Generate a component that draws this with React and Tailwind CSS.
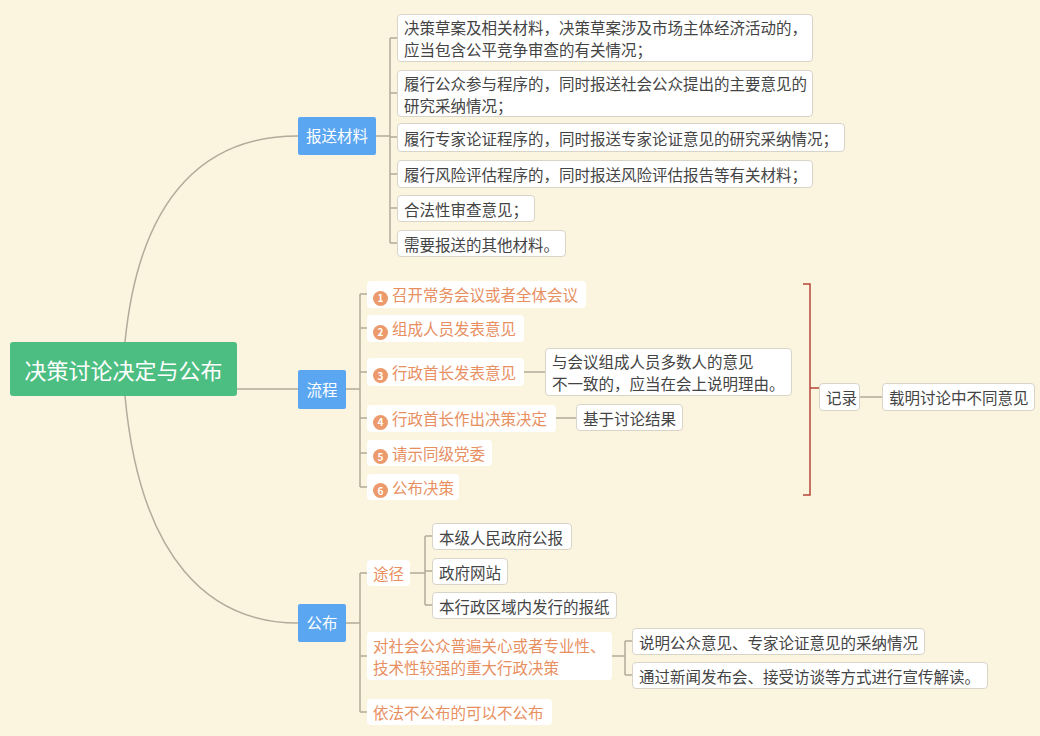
const F = { fontFamily: '"Noto Sans CJK SC", "Noto Sans", sans-serif' };

function Box({ x, y, w, h, children, orange }) {
  return (
    <div
      className={`absolute flex items-center whitespace-nowrap rounded-[4px] bg-white px-[6px] text-[15.5px] leading-[22px] ${orange ? "text-[#e88f62]" : "border border-[#d9d4c8] text-[#444]"}`}
      style={{ left: x, top: y, width: w, height: h }}
    >
      <div>{children}</div>
    </div>
  );
}

function Num({ n }) {
  return (
    <span className="mr-[4px] inline-flex h-[15px] w-[15px] items-center justify-center rounded-full bg-[#ec9a6c] align-[-1px] text-[10px] font-bold leading-none text-white">
      {n}
    </span>
  );
}

function Topic({ x, y, w, h, children }) {
  return (
    <div className="absolute flex items-center justify-center rounded-[2px] bg-[#5aa6f1] text-[15.5px] text-white" style={{ left: x, top: y, width: w, height: h }}>
      {children}
    </div>
  );
}

const line = "#b3ab9b";

export default function App() {
  return (
    <div className="relative h-[736px] w-[1040px] overflow-hidden bg-[#fbf4df]" style={F}>
      <svg className="absolute left-0 top-0" width="1040" height="736" fill="none" strokeWidth="1.5">
        <path d="M125 342 C 140 190, 210 136, 298 136" stroke={line} />
        <path d="M237 389 L298 389" stroke={line} />
        <path d="M125 396 C 140 560, 210 623, 298 623" stroke={line} />
        <path d="M376 136 L390 136 M390 38 L390 243 M390 38 L397 38 M390 93 L397 93 M390 137 L397 137 M390 174 L397 174 M390 208 L397 208 M390 243 L397 243" stroke={line} />
        <path d="M346 389 L360 389 M360 294 L360 487 M360 294 L367 294 M360 328 L367 328 M360 372 L367 372 M360 418 L367 418 M360 453 L367 453 M360 487 L367 487" stroke={line} />
        <path d="M524 372 L545 372 M556 418 L576 418" stroke={line} />
        <path d="M803 284 L810 284 L810 495 L803 495 M810 388 L819 388" stroke="#b5473a" />
        <path d="M860 397 L882 397" stroke={line} />
        <path d="M346 623 L360 623 M360 573 L360 712 M360 573 L367 573 M360 656 L367 656 M360 712 L367 712" stroke={line} />
        <path d="M410 573 L425 573 M425 536 L425 605 M425 536 L432 536 M425 571 L432 571 M425 605 L432 605" stroke={line} />
        <path d="M612 656 L625 656 M625 641 L625 675 M625 641 L632 641 M625 675 L632 675" stroke={line} />
      </svg>

      <div className="absolute left-[10px] top-[342px] flex h-[54px] w-[227px] items-center justify-center rounded-[3px] bg-[#4dbe82] text-[22px] text-white">
        决策讨论决定与公布
      </div>

      <Topic x={298} y={117} w={78} h={38}>报送材料</Topic>
      <Topic x={298} y={370} w={48} h={39}>流程</Topic>
      <Topic x={298} y={604} w={48} h={38}>公布</Topic>

      <Box x={397} y={14} w={416} h={48}>决策草案及相关材料，决策草案涉及市场主体经济活动的，<br />应当包含公平竞争审查的有关情况；</Box>
      <Box x={397} y={70} w={416} h={47}>履行公众参与程序的，同时报送社会公众提出的主要意见的<br />研究采纳情况；</Box>
      <Box x={397} y={123} w={448} h={29}>履行专家论证程序的，同时报送专家论证意见的研究采纳情况；</Box>
      <Box x={397} y={160} w={416} h={28}>履行风险评估程序的，同时报送风险评估报告等有关材料；</Box>
      <Box x={397} y={195} w={138} h={27}>合法性审查意见；</Box>
      <Box x={397} y={230} w={169} h={27}>需要报送的其他材料。</Box>

      <Box orange x={367} y={281} w={219} h={27}><Num n="1" />召开常务会议或者全体会议</Box>
      <Box orange x={367} y={315} w={157} h={27}><Num n="2" />组成人员发表意见</Box>
      <Box orange x={367} y={358} w={157} h={28}><Num n="3" />行政首长发表意见</Box>
      <Box orange x={367} y={405} w={189} h={27}><Num n="4" />行政首长作出决策决定</Box>
      <Box orange x={367} y={440} w={125} h={26}><Num n="5" />请示同级党委</Box>
      <Box orange x={367} y={474} w={92} h={26}><Num n="6" />公布决策</Box>

      <Box x={545} y={348} w={247} h={48}>与会议组成人员多数人的意见<br />不一致的，应当在会上说明理由。</Box>
      <Box x={576} y={404} w={107} h={27}>基于讨论结果</Box>
      <Box x={819} y={383} w={41} h={28}>记录</Box>
      <Box x={882} y={383} w={153} h={28}>载明讨论中不同意见</Box>

      <Box orange x={367} y={560} w={43} h={26}>途径</Box>
      <Box x={432} y={523} w={140} h={27}>本级人民政府公报</Box>
      <Box x={432} y={558} w={76} h={27}>政府网站</Box>
      <Box x={432} y={592} w={185} h={27}>本行政区域内发行的报纸</Box>
      <Box orange x={367} y={632} w={245} h={48}>对社会公众普遍关心或者专业性、<br />技术性较强的重大行政决策</Box>
      <Box x={632} y={628} w={293} h={27}>说明公众意见、专家论证意见的采纳情况</Box>
      <Box x={632} y={662} w={356} h={27}>通过新闻发布会、接受访谈等方式进行宣传解读。</Box>
      <Box orange x={367} y={699} w={185} h={26}>依法不公布的可以不公布</Box>
    </div>
  );
}
